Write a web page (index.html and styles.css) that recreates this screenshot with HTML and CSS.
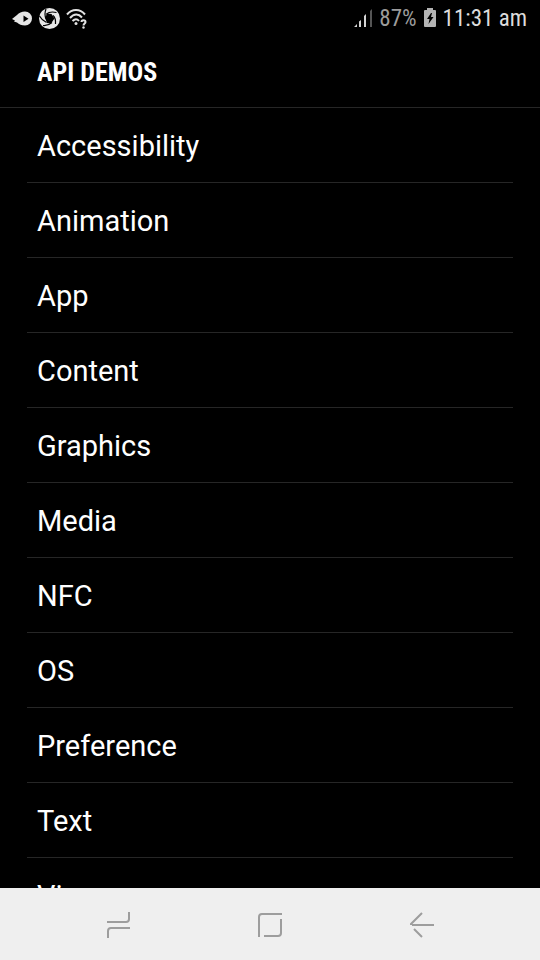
FILE: index.html
```html
<!DOCTYPE html>
<html lang="en">
<head>
<meta charset="utf-8">
<meta name="viewport" content="width=device-width, initial-scale=1">
<title>API Demos</title>
<link rel="stylesheet" href="styles.css">
</head>
<body>
<div class="status">
  <div class="status-icons">
    <svg width="20" height="24" viewBox="0 0 20 24" aria-hidden="true"><path fill="#e6e6e6" fill-rule="evenodd" d="M0 13 5 9Q8 5.500 13 5.500A7 7 0 0 1 13 19.500Q8 19.500 5 16.500L2 15.500 3 14.500ZM11.500 9.500V16L16.500 12.700Z"/></svg>
    <svg width="22" height="24" viewBox="0 0 22 24" aria-hidden="true"><circle cx="11.500" cy="12.500" r="10.500" fill="#e8e8e8"/><path fill="#000" d="M8.500 7.500 13.500 8 16.500 12.500 13 17.500 9 17 7.500 13Z"/><path fill="none" stroke="#000" stroke-width="1.200" d="M8.500 8Q12 5 18.500 6.500M15 9.500Q18 12 17.500 18M14 16.500Q10 20 5 19.500M8.500 16.500Q4 14.500 1.500 10M8 13Q6 8 8 3"/></svg>
    <svg width="22" height="24" viewBox="0 0 22 24" aria-hidden="true"><g fill="none" stroke="#e2e2e2" stroke-width="2"><path d="M1 8.500C6 2.500 14 2.500 19 8.500M4 12C8 7.500 12.500 7.500 16 11.500M6.500 15C9 12.500 11 12.500 13 15"/><path d="M15.500 16C15.500 13.500 19.500 13.500 19.500 16 19.500 17.500 17.500 17.500 17.500 19.500"/></g><circle cx="10" cy="17.500" r="1.500" fill="#e2e2e2"/><circle cx="17.500" cy="21.500" r="1.200" fill="#e2e2e2"/></svg>
  </div>
  <div class="status-info">
    <svg width="18" height="20" viewBox="0 0 18 20" aria-hidden="true"><path fill="#d4d4d4" d="M0 19 3 16V19ZM5 13.500 7 12V19H5ZM10 8 12 6V19H10Z"/><path fill="#555" d="M16 3 18 1V19H16Z"/></svg>
    <span class="battery-level">87%</span>
    <svg width="12" height="20" viewBox="0 0 12 20" aria-hidden="true"><path fill="#b4b4b4" d="M3 0H9V2H11Q12 2 12 3V18Q12 19 11 19H1Q0 19 0 18V3Q0 2 1 2H3Z"/><path fill="#000" d="M7 5 3 11H5.500L4.500 16 9.500 9H7L8 5Z"/></svg>
    <time>11:31 am</time>
  </div>
</div>
<header class="title-bar"><h1>API DEMOS</h1></header>
<main class="content">
  <ul class="list">
    <li><a href="#accessibility">Accessibility</a></li>
    <li><a href="#animation">Animation</a></li>
    <li><a href="#app">App</a></li>
    <li><a href="#content">Content</a></li>
    <li><a href="#graphics">Graphics</a></li>
    <li><a href="#media">Media</a></li>
    <li><a href="#nfc">NFC</a></li>
    <li><a href="#os">OS</a></li>
    <li><a href="#preference">Preference</a></li>
    <li><a href="#text">Text</a></li>
    <li><a href="#views">Views</a></li>
  </ul>
</main>
<nav class="nav-bar" aria-label="System">
  <button type="button" aria-label="Recent apps"><svg width="30" height="30" viewBox="0 0 30 30"><path d="M4 13H23Q26 13 26 10V3M27 19H8Q5 19 5 22V29"/></svg></button>
  <button type="button" aria-label="Home"><svg width="30" height="30" viewBox="0 0 30 30"><path d="M4 28V8Q4 5 7 5H27M26 10V24Q26 27 23 27H9"/></svg></button>
  <button type="button" aria-label="Back"><svg width="30" height="30" viewBox="0 0 30 30"><path d="M27 16H5M15 4 4 15V16M7 20 15 28"/></svg></button>
</nav>
</body>
</html>
```
FILE: styles.css
```css
* {
  box-sizing: border-box;
}

body {
  display: flex;
  flex-direction: column;
  height: 100vh;
  margin: 0;
  overflow: hidden;
  background: #000;
  color: #fff;
  font-family: Roboto, "Liberation Sans", sans-serif;
}

.status {
  display: flex;
  flex: none;
  align-items: center;
  justify-content: space-between;
  height: 36px;
  padding: 0 13px 0 12px;
  font-family: "Roboto Condensed", Roboto, sans-serif;
  font-size: 23px;
  line-height: 34px;
  color: #dcdcdc;
}

.status svg {
  display: block;
}

.status-icons {
  display: flex;
  gap: 6px;
}

.status-info {
  display: flex;
  align-items: center;
  gap: 7px;
}

.battery-level,
time {
  padding-top: 2px;
}

.battery-level {
  color: #9c9c9c;
}

.title-bar {
  display: flex;
  flex: none;
  align-items: center;
  height: 72px;
  padding: 0 37px;
  border-bottom: 1px solid #262626;
}

h1 {
  margin: 0;
  font-family: "Roboto Condensed", Roboto, sans-serif;
  font-size: 26px;
  font-weight: 700;
  line-height: 32px;
}

.content {
  flex: 1;
  min-height: 0;
  overflow: hidden;
}

.list {
  margin: 0;
  padding: 0 27px;
  list-style: none;
}

.list li {
  border-bottom: 1px solid #262626;
}

.list a {
  display: block;
  padding: 2px 10px 0;
  color: #fff;
  font-size: 29px;
  line-height: 72px;
  text-decoration: none;
}

.nav-bar {
  display: flex;
  flex: none;
  height: 72px;
  padding: 0 42px;
  background: #efefef;
}

.nav-bar button {
  display: flex;
  flex: 1;
  align-items: center;
  justify-content: center;
  padding: 0;
  border: 0;
  background: none;
}

.nav-bar path {
  fill: none;
  stroke: #9d9d9d;
  stroke-width: 2;
}
```
